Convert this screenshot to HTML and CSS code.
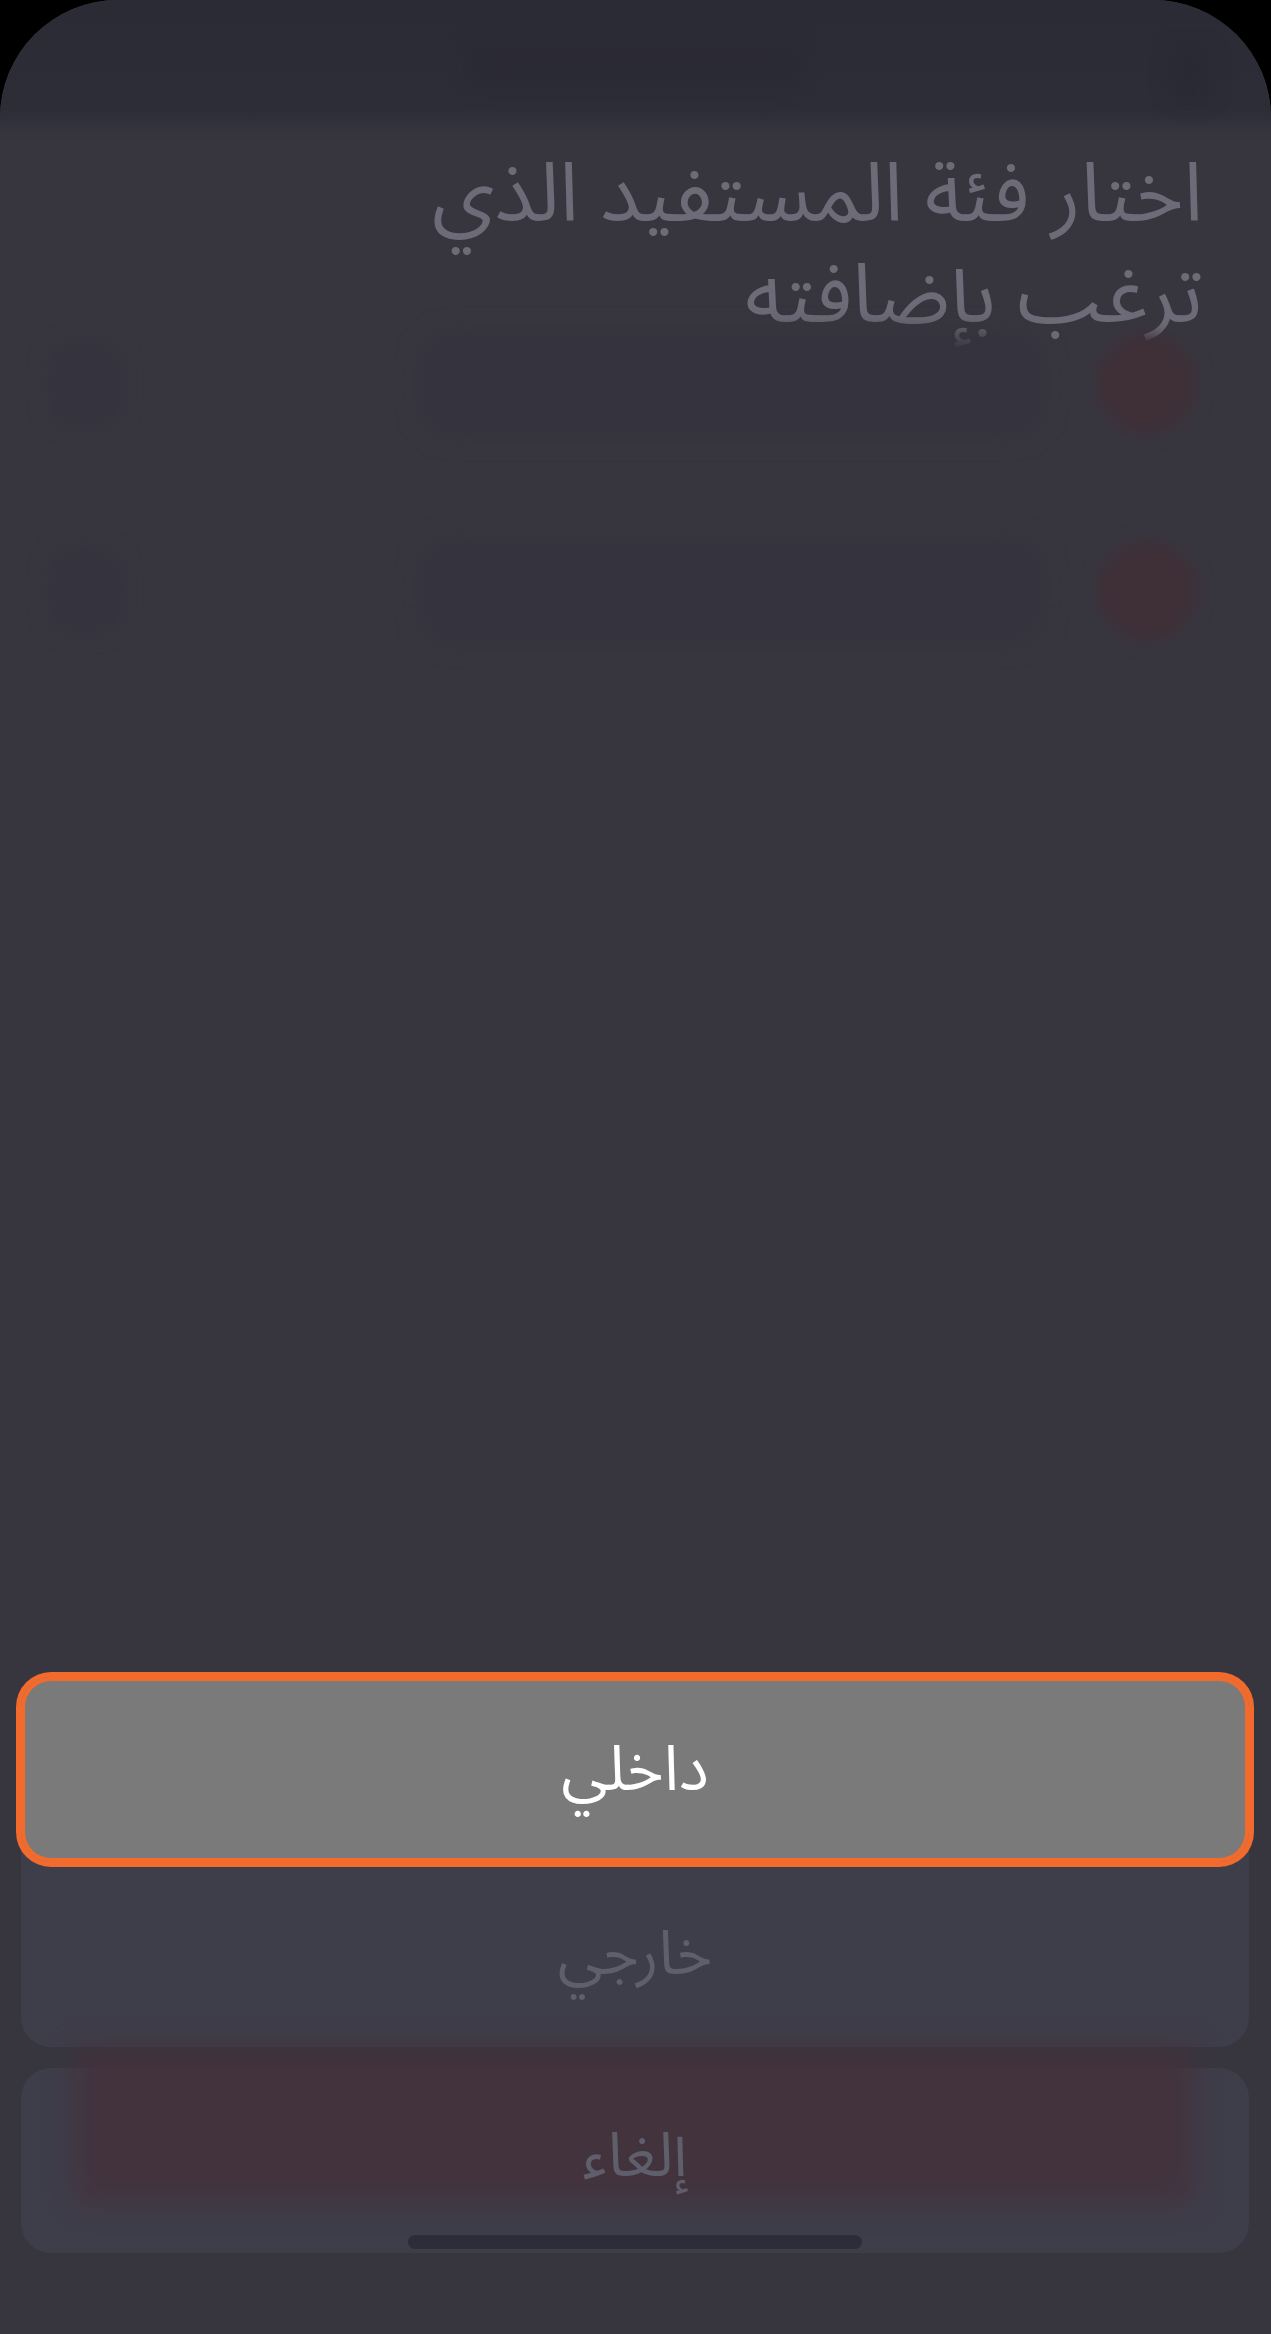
FILE: index.html
```html
<!DOCTYPE html>
<html lang="ar" dir="rtl">
<head>
  <meta charset="UTF-8">
  <meta name="viewport" content="width=device-width, initial-scale=1.0">
  <title>اختيار فئة المستفيد</title>
  <link rel="stylesheet" href="styles.css">
</head>
<body>

  <div class="screen">
    <!-- page behind the sheet, dimmed and blurred -->
    <div class="page">
      <div class="topbar">
        <span class="ghost ghost-back"></span>
        <span class="ghost ghost-title"></span>
      </div>

      <h1 class="title">اختار فئة المستفيد الذي ترغب بإضافته</h1>

      <div class="list">
        <div class="row">
          <span class="dot"></span>
          <span class="row-text"></span>
          <span class="chev"></span>
        </div>
        <div class="row">
          <span class="dot"></span>
          <span class="row-text"></span>
          <span class="chev"></span>
        </div>
      </div>
    </div>

    <!-- action sheet -->
    <div class="sheet">
      <div class="group">
        <button class="option focused">داخلي</button>
        <button class="option">خارجي</button>
      </div>
      <div class="group cancel">
        <span class="cancel-glow"></span>
        <button class="option">إلغاء</button>
      </div>
    </div>

    <span class="home-bar"></span>
  </div>

</body>
</html>
```

FILE: styles.css
```css
* {
  box-sizing: border-box;
  margin: 0;
  padding: 0;
}

body {
  background-color: #000;
  font-family: "Noto Sans Arabic", "Noto Naskh Arabic", "DejaVu Sans", sans-serif;
}

.screen {
  position: relative;
  width: 1271px;
  height: 2334px;
  overflow: hidden;
  border-radius: 118px 118px 0 0;
  background-color: #37363f;
}

/* background page */
.page {
  display: flex;
  flex-direction: column;
}

.topbar {
  position: relative;
  height: 140px;
  background: linear-gradient(#2b2b36 0, #2d2d38 110px, #35343f 134px, #37363f 140px);
}

.ghost {
  position: absolute;
  background-color: #292833;
  filter: blur(10px);
  opacity: 0.6;
}

.ghost-back {
  right: 60px;
  top: 50px;
  width: 40px;
  height: 50px;
}

.ghost-title {
  left: 470px;
  top: 45px;
  width: 330px;
  height: 40px;
}

.title {
  margin-top: 5px;
  padding: 0 68px 0 380px;
  font-size: 82px;
  font-weight: normal;
  line-height: 101px;
  color: #6c6b77;
  text-align: right;
}

.list {
  display: flex;
  flex-direction: column;
  gap: 85px;
  margin-top: -24px;
}

.row {
  display: flex;
  align-items: center;
  height: 122px;
  padding: 0 74px 0 50px;
}

.dot {
  width: 100px;
  height: 100px;
  border-radius: 50%;
  background-color: #3f2f37;
  filter: blur(8px);
}

.row-text {
  width: 620px;
  height: 100px;
  margin-right: 55px;
  border-radius: 30px;
  background-color: #34333e;
  filter: blur(12px);
}

.chev {
  width: 70px;
  height: 80px;
  margin-right: auto;
  border-radius: 20px;
  background-color: #34333e;
  filter: blur(10px);
}

/* action sheet */
.sheet {
  position: absolute;
  left: 0;
  right: 0;
  bottom: 0;
  display: flex;
  flex-direction: column;
  gap: 21px;
  padding: 0 22px 81px 21px;
}

.group {
  position: relative;
  display: flex;
  flex-direction: column;
  border-radius: 30px;
  background-color: #3e3d4a;
}

.option {
  position: relative;
  height: 185px;
  border: none;
  border-radius: 30px;
  background: transparent;
  font-family: inherit;
  font-size: 61px;
  color: #5f5e6b;
}

.option.focused {
  background-color: #7a7a7a;
  color: #fff;
  font-size: 63px;
  box-shadow: 0 0 0 5px #f26a2c, inset 0 0 0 4px #f26a2c;
}

.cancel .option {
  padding-bottom: 8px;
}

.cancel-glow {
  position: absolute;
  left: 55px;
  right: 55px;
  top: -22px;
  bottom: 50px;
  background-color: #44313a;
  filter: blur(14px);
  opacity: 0.8;
}

.home-bar {
  position: absolute;
  left: 408px;
  bottom: 85px;
  width: 454px;
  height: 14px;
  border-radius: 7px;
  background-color: #2d2c39;
}
```
